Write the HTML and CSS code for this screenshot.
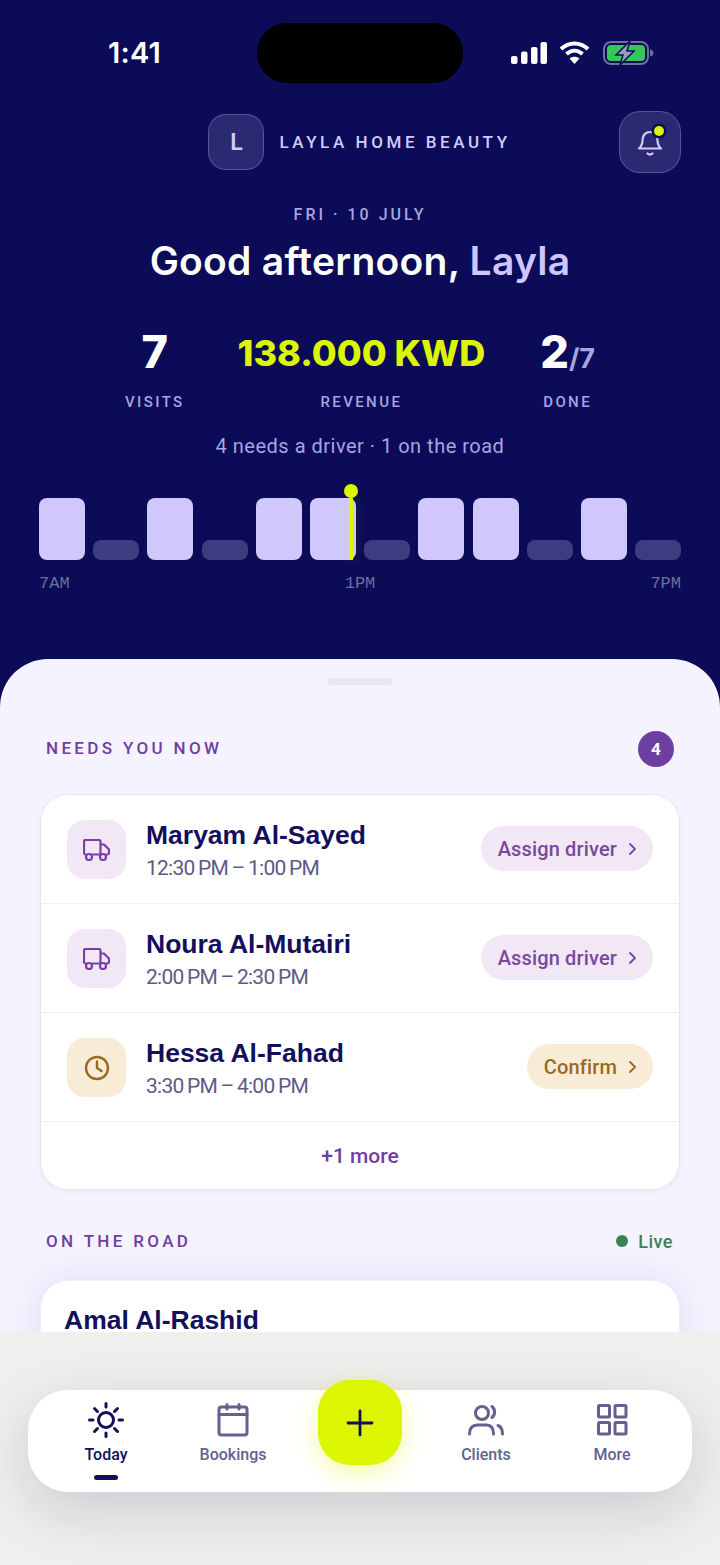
FILE: index.html
```html
<!DOCTYPE html>
<html>

<head>
  <meta charset="UTF-8">
  <title>Layla Home Beauty</title>
  <link rel="stylesheet" href="styles.css">
</head>

<body>
  <div class="phone">

    <section class="hero">
      <div class="status">
        <span class="clock">1:41</span>
        <div class="island"></div>
        <div class="status-icons">
          <svg width="36" height="22" viewBox="0 0 36 22" fill="#fff">
            <rect x="0" y="14" width="6.500" height="8" rx="2" />
            <rect x="10" y="9.500" width="6.500" height="12.500" rx="2" />
            <rect x="20" y="5" width="6.500" height="17" rx="2" />
            <rect x="29.500" y="0" width="6.500" height="22" rx="2" />
          </svg>
          <svg width="31" height="23" viewBox="0 0 31 23" fill="none" stroke="#fff" stroke-width="4">
            <path d="M2 8C10 .5 21 .5 29 8" />
            <path d="M7.500 13C12.500 8.500 18.500 8.500 23.500 13" />
            <path d="M15.500 23L10.500 17.500C13.500 15 17.500 15 20.500 17.500Z" fill="#fff" stroke="none" />
          </svg>
          <svg class="battery" width="51" height="24" viewBox="0 0 51 24">
            <rect x="1" y="1" width="44" height="22" rx="7" fill="none" stroke="#6f6f9c" stroke-width="2" />
            <rect x="4" y="4" width="38" height="16" rx="4" fill="#35c759" />
            <path d="M47 8.500c2 .5 3.500 1.500 3.500 3.500s-1.500 3-3.500 3.500z" fill="#6f6f9c" />
            <path d="M27 0L13 14h7l-3 10 14-14h-7z" fill="#9a9abf" stroke="#0b0b57" stroke-width="1.500" />
          </svg>
        </div>
      </div>

      <header class="brand-row">
        <div class="brand">
          <div class="avatar">L</div>
          <span class="brand-name">LAYLA HOME BEAUTY</span>
        </div>
        <button class="bell">
          <svg width="28" height="30" viewBox="0 0 28 30" fill="none" stroke="#d2caff" stroke-width="2.200" stroke-linecap="round" stroke-linejoin="round">
            <path d="M3 21.500c2.500-2 3.500-4 3.500-8.500C6.500 8 10 5 14 5s7.500 3 7.500 8c0 4.500 1 6.500 3.500 8.500z" />
            <path d="M11.500 26.500c1.500 1.300 3.500 1.300 5 0" />
          </svg>
          <span class="bell-dot"></span>
        </button>
      </header>

      <p class="date">FRI · 10 JULY</p>
      <h1 class="greeting">Good afternoon, <span>Layla</span></h1>

      <div class="stats">
        <div class="stat">
          <div class="stat-value">7</div>
          <div class="stat-label">VISITS</div>
        </div>
        <div class="stat stat-mid">
          <div class="stat-value stat-money">138.000 KWD</div>
          <div class="stat-label">REVENUE</div>
        </div>
        <div class="stat">
          <div class="stat-value">2<span class="stat-of">/7</span></div>
          <div class="stat-label">DONE</div>
        </div>
      </div>

      <p class="summary">4 needs a driver · 1 on the road</p>

      <div class="chart">
        <div class="bar tall"></div>
        <div class="bar"></div>
        <div class="bar tall"></div>
        <div class="bar"></div>
        <div class="bar tall"></div>
        <div class="bar tall"></div>
        <div class="bar"></div>
        <div class="bar tall"></div>
        <div class="bar tall"></div>
        <div class="bar"></div>
        <div class="bar tall"></div>
        <div class="bar"></div>
        <div class="now"></div>
      </div>
      <div class="axis">
        <span>7AM</span>
        <span>1PM</span>
        <span>7PM</span>
      </div>
    </section>

    <section class="sheet">
      <div class="handle"></div>

      <div class="section-head">
        <h2>NEEDS YOU NOW</h2>
        <span class="count">4</span>
      </div>

      <div class="card">
        <div class="row">
          <div class="row-icon purple">
            <svg width="27" height="22" viewBox="0 0 27 22" fill="none" stroke="#7b3fa8" stroke-width="2.200" stroke-linejoin="round">
              <path d="M3 15.500H2.500a1.500 1.500 0 0 1-1.500-1.500V2.500A1.500 1.500 0 0 1 2.500 1H16a1.500 1.500 0 0 1 1.500 1.500V15.500H9" />
              <path d="M17.500 5.500H21l5 5v3.500a1.500 1.500 0 0 1-1.500 1.500H23M17.500 15.500H17" />
              <circle cx="6" cy="18" r="3" />
              <circle cx="20" cy="18" r="3" />
            </svg>
          </div>
          <div class="row-text">
            <div class="name">Maryam Al-Sayed</div>
            <div class="time">12:30 PM – 1:00 PM</div>
          </div>
          <button class="pill purple">Assign driver
            <svg class="chev" width="9" height="14" viewBox="0 0 9 14" fill="none" stroke="currentColor" stroke-width="1.800" stroke-linecap="round" stroke-linejoin="round"><path d="M2 2l5 5-5 5" /></svg>
          </button>
        </div>

        <div class="row">
          <div class="row-icon purple">
            <svg width="27" height="22" viewBox="0 0 27 22" fill="none" stroke="#7b3fa8" stroke-width="2.200" stroke-linejoin="round">
              <path d="M3 15.500H2.500a1.500 1.500 0 0 1-1.500-1.500V2.500A1.500 1.500 0 0 1 2.500 1H16a1.500 1.500 0 0 1 1.500 1.500V15.500H9" />
              <path d="M17.500 5.500H21l5 5v3.500a1.500 1.500 0 0 1-1.500 1.500H23M17.500 15.500H17" />
              <circle cx="6" cy="18" r="3" />
              <circle cx="20" cy="18" r="3" />
            </svg>
          </div>
          <div class="row-text">
            <div class="name">Noura Al-Mutairi</div>
            <div class="time">2:00 PM – 2:30 PM</div>
          </div>
          <button class="pill purple">Assign driver
            <svg class="chev" width="9" height="14" viewBox="0 0 9 14" fill="none" stroke="currentColor" stroke-width="1.800" stroke-linecap="round" stroke-linejoin="round"><path d="M2 2l5 5-5 5" /></svg>
          </button>
        </div>

        <div class="row">
          <div class="row-icon amber">
            <svg width="26" height="26" viewBox="0 0 26 26" fill="none" stroke="#9a6a20" stroke-width="2.400" stroke-linecap="round" stroke-linejoin="round">
              <circle cx="13" cy="13" r="11" />
              <path d="M13 6.500V13l4.500 3" />
            </svg>
          </div>
          <div class="row-text">
            <div class="name">Hessa Al-Fahad</div>
            <div class="time">3:30 PM – 4:00 PM</div>
          </div>
          <button class="pill amber">Confirm
            <svg class="chev" width="9" height="14" viewBox="0 0 9 14" fill="none" stroke="currentColor" stroke-width="1.800" stroke-linecap="round" stroke-linejoin="round"><path d="M2 2l5 5-5 5" /></svg>
          </button>
        </div>

        <div class="more-row">+1 more</div>
      </div>

      <div class="section-head road-head">
        <h2>ON THE ROAD</h2>
        <span class="live"><i></i>Live</span>
      </div>

      <div class="card road-card">
        <div class="name">Amal Al-Rashid</div>
      </div>
    </section>

    <div class="dock">
      <nav class="tabs">
        <a class="tab active">
          <svg width="38" height="38" viewBox="0 0 38 38" fill="none" stroke="#12105c" stroke-width="3" stroke-linecap="round">
            <circle cx="19" cy="19" r="7.500" />
            <path d="M19 2.500v3.500M19 32v3.500M2.500 19H6M32 19h3.500M7.500 7.500l3 3M27.500 27.500l3 3M7.500 30.500l3-3M27.500 10.500l3-3" />
          </svg>
          <span>Today</span>
        </a>
        <a class="tab">
          <svg width="32" height="34" viewBox="0 0 32 34" fill="none" stroke="#63618f" stroke-width="3" stroke-linecap="round" stroke-linejoin="round">
            <rect x="2" y="4" width="28" height="28" rx="2.500" />
            <path d="M2 11.500h28M10 1.500v4.500M22 1.500v4.500" />
          </svg>
          <span>Bookings</span>
        </a>
        <div class="tab-fab">
          <button class="fab">
            <svg width="28" height="28" viewBox="0 0 28 28" fill="none" stroke="#12105c" stroke-width="2.800" stroke-linecap="round">
              <path d="M14 2v24M2 14h24" />
            </svg>
          </button>
        </div>
        <a class="tab">
          <svg width="38" height="34" viewBox="0 0 38 34" fill="none" stroke="#63618f" stroke-width="3" stroke-linecap="round" stroke-linejoin="round">
            <circle cx="15" cy="10" r="6.500" />
            <path d="M25 3.500c3.500 3 3.500 8 0 11" />
            <path d="M2.500 31c0-6 3-9 8-9h9c4.500 0 7 3 7 9" />
            <path d="M31 22.500c3 1 4.500 4 4.500 8.500" />
          </svg>
          <span>Clients</span>
        </a>
        <a class="tab">
          <svg width="32" height="34" viewBox="0 0 32 34" fill="none" stroke="#63618f" stroke-width="3">
            <rect x="2.500" y="2.500" width="11" height="11.500" rx="1" />
            <rect x="19" y="2.500" width="11" height="11.500" rx="1" />
            <rect x="2.500" y="19.500" width="11" height="11.500" rx="1" />
            <rect x="19" y="19.500" width="11" height="11.500" rx="1" />
          </svg>
          <span>More</span>
        </a>
      </nav>
    </div>

  </div>
</body>

</html>
```

FILE: styles.css
```css
* {
  box-sizing: border-box;
}

body {
  margin: 0;
  font-family: Roboto, "Noto Sans", sans-serif;
  background-color: #0b0b57;
}

button {
  font-family: inherit;
  border: 0;
  padding: 0;
}

h1,
h2,
p {
  margin: 0;
}

.phone {
  position: relative;
  width: 720px;
  height: 1565px;
  overflow: hidden;
  background-color: #0b0b57;
}

/* hero */
.hero {
  height: 659px;
  padding-top: 23px;
  color: #fff;
}

.status {
  display: grid;
  grid-template-columns: 257px 206px 257px;
  align-items: center;
  height: 60px;
}

.clock {
  margin-top: -2px;
  padding-left: 108px;
  font-family: Inter, sans-serif;
  font-size: 29px;
  font-weight: 600;
  letter-spacing: 0.2px;
}

.island {
  height: 60px;
  background-color: #000;
  border-radius: 30px;
}

.status-icons {
  display: flex;
  align-items: center;
  gap: 12px;
  padding-left: 48px;
  margin-top: -1px;
}

.battery {
  margin-left: 1px;
}

.brand-row {
  display: grid;
  grid-template-columns: 1fr auto 1fr;
  align-items: center;
  margin-top: 28px;
  padding: 0 39px;
}

.brand {
  grid-column: 2;
  display: flex;
  align-items: center;
  gap: 15px;
}

.avatar {
  display: flex;
  align-items: center;
  justify-content: center;
  width: 56px;
  height: 56px;
  border-radius: 18px;
  background-color: rgba(208, 200, 253, 0.16);
  border: 1.500px solid rgba(208, 200, 253, 0.28);
  color: #d2caff;
  font-size: 23px;
  font-weight: 600;
}

.brand-name {
  padding-right: 1px;
  font-size: 17px;
  font-weight: 500;
  letter-spacing: 3.550px;
  color: #d2caff;
}

.bell {
  position: relative;
  justify-self: end;
  display: flex;
  align-items: center;
  justify-content: center;
  width: 62px;
  height: 62px;
  border-radius: 21px;
  background-color: rgba(208, 200, 253, 0.16);
  border: 1.500px solid rgba(208, 200, 253, 0.28);
}

.bell-dot {
  position: absolute;
  top: 14px;
  right: 16px;
  width: 10px;
  height: 10px;
  border-radius: 50%;
  background-color: #dcf500;
  box-shadow: 0 0 0 2.500px #0e0e58;
}

.date {
  margin-top: 32px;
  text-align: center;
  font-size: 16px;
  font-weight: 500;
  letter-spacing: 3px;
  line-height: 20px;
  color: #a9a3e0;
}

.greeting {
  margin-top: 12px;
  text-align: center;
  font-family: Inter, sans-serif;
  font-size: 39px;
  font-weight: 600;
  line-height: 48px;
  letter-spacing: 0.250px;
}

.greeting span {
  color: #cfc6ff;
}

.stats {
  display: flex;
  margin-top: 41px;
  padding-left: 125px;
}

.stat {
  display: flex;
  flex-direction: column;
  align-items: center;
}

.stat-mid {
  margin: 0 55px 0 53px;
}

.stat-value {
  height: 52px;
  font-family: Inter, sans-serif;
  font-size: 45px;
  font-weight: 800;
  line-height: 52px;
  white-space: nowrap;
}

.stat-money {
  font-size: 36px;
  line-height: 55px;
  color: #dcf500;
}

.stat-of {
  font-size: 27px;
  font-weight: 700;
  color: #a9a3e0;
}

.stat-label {
  margin-top: 15px;
  font-size: 15px;
  font-weight: 500;
  letter-spacing: 2.400px;
  line-height: 18px;
  color: #a9a3e0;
}

.summary {
  margin-top: 22px;
  text-align: center;
  font-size: 20px;
  line-height: 26px;
  letter-spacing: 0.500px;
  color: #a9a3e0;
}

.chart {
  position: relative;
  display: grid;
  grid-template-columns: repeat(12, 46px);
  column-gap: 8.200px;
  align-items: end;
  height: 62px;
  margin: 39px 39px 0;
}

.bar {
  height: 20px;
  border-radius: 8px;
  background-color: #3e3c80;
}

.bar.tall {
  height: 62px;
  background-color: #d0c8fd;
}

.now {
  position: absolute;
  left: 310px;
  top: 0;
  bottom: 0;
  width: 4px;
  background-color: #dcf500;
  box-shadow: 0 0 14px rgba(220, 245, 0, 0.25);
}

.now::before {
  content: "";
  position: absolute;
  top: -14px;
  left: -5px;
  width: 14px;
  height: 14px;
  border-radius: 50%;
  background-color: #dcf500;
}

.axis {
  display: flex;
  justify-content: space-between;
  margin: 14px 39px 0;
  font-family: "Liberation Mono", monospace;
  font-size: 17px;
  line-height: 20px;
  color: #6e6d9f;
}

/* sheet */
.sheet {
  height: 906px;
  padding: 19px 40px 0;
  background-color: #f5f3ff;
  border-radius: 48px 48px 0 0;
}

.handle {
  width: 64px;
  height: 7px;
  margin: 0 auto;
  border-radius: 4px;
  background-color: #e8e6f2;
}

.section-head {
  display: flex;
  align-items: center;
  justify-content: space-between;
  height: 36px;
  margin-top: 46px;
  padding: 0 6px;
}

.section-head h2 {
  margin-bottom: 2px;
  font-size: 17px;
  font-weight: 500;
  letter-spacing: 3.350px;
  color: #6f3fa0;
}

.count {
  display: flex;
  align-items: center;
  justify-content: center;
  width: 36px;
  height: 36px;
  border-radius: 50%;
  background-color: #6e3fa3;
  color: #fff;
  font-size: 17px;
  font-weight: 700;
}

.card {
  margin-top: 27px;
  background-color: #fff;
  border: 1px solid #e6e3f3;
  border-radius: 28px;
  box-shadow: 0 2px 6px rgba(30, 20, 100, 0.04);
}

.row {
  display: flex;
  align-items: center;
  height: 109px;
  padding: 1px 26px 0;
  border-bottom: 1px solid #f0eff5;
}

.row-icon {
  display: flex;
  align-items: center;
  justify-content: center;
  width: 59px;
  height: 59px;
  border-radius: 18px;
}

.purple {
  background-color: #f1e7f5;
  color: #7a479f;
}

.amber {
  background-color: #f8ecd6;
  color: #9a6a20;
}

.row-text {
  flex: 1;
  margin: 2px 0 0 20px;
}

.name {
  font-family: "Liberation Sans", sans-serif;
  font-size: 26.500px;
  font-weight: 700;
  line-height: 32px;
  color: #12105c;
}

.time {
  margin-top: 2px;
  font-size: 21px;
  line-height: 30px;
  letter-spacing: -0.750px;
  word-spacing: -1px;
  color: #5c5b85;
}

.pill {
  display: flex;
  align-items: center;
  gap: 11px;
  height: 45px;
  margin-top: -2px;
  padding: 0 16px 0 17px;
  border-radius: 23px;
  font-size: 20px;
  font-weight: 500;
  letter-spacing: 0.150px;
}

.more-row {
  display: flex;
  align-items: center;
  justify-content: center;
  height: 67px;
  font-size: 21px;
  font-weight: 500;
  color: #6f3fa0;
}

.road-head {
  margin-top: 34px;
}

.live {
  display: flex;
  align-items: center;
  gap: 10px;
  margin-bottom: 2px;
  padding-right: 1px;
  font-size: 18px;
  font-weight: 500;
  letter-spacing: 0.500px;
  color: #3b8258;
}

.live i {
  width: 12px;
  height: 12px;
  border-radius: 50%;
  background-color: #3b8258;
}

.road-card {
  margin-top: 20px;
  height: 120px;
  padding: 23px 23px 0;
  border-color: #f0eef8;
  box-shadow: 0 0 34px rgba(40, 30, 110, 0.1);
}

/* bottom nav */
.dock {
  position: absolute;
  left: 0;
  right: 0;
  top: 1332px;
  bottom: 0;
  padding: 58px 28px 0;
  background-color: #efefee;
}

.tabs {
  display: grid;
  grid-template-columns: 126px 128px 126px 126px 126px;
  height: 102px;
  padding: 0 15px;
  background-color: #fff;
  border-radius: 40px;
  box-shadow: 0 18px 60px rgba(20, 20, 60, 0.16);
}

.tab {
  position: relative;
  display: flex;
  flex-direction: column;
  align-items: center;
  padding-top: 11px;
  font-size: 16px;
  font-weight: 500;
  color: #63618f;
}

.tab svg {
  height: 38px;
}

.tab span {
  margin-top: 5px;
  line-height: 22px;
}

.tab.active {
  color: #12105c;
}

.tab.active::after {
  content: "";
  position: absolute;
  left: 50%;
  top: 85px;
  width: 24px;
  height: 5px;
  margin-left: -12px;
  border-radius: 3px;
  background-color: #12105c;
}

.tab-fab {
  display: flex;
  justify-content: center;
}

.fab {
  display: flex;
  align-items: center;
  justify-content: center;
  width: 84px;
  height: 85px;
  margin-top: -10px;
  border-radius: 32px;
  background-color: #dcf500;
  box-shadow: 0 8px 26px rgba(220, 245, 0, 0.35);
}
```
